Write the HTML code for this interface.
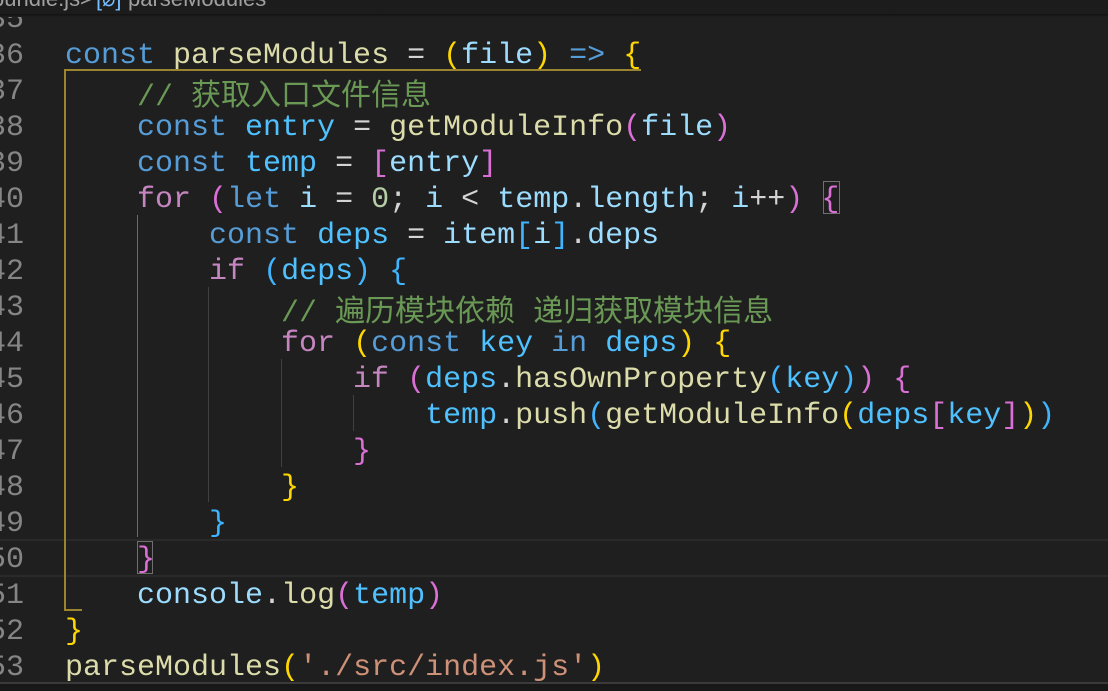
<!DOCTYPE html>
<html><head><meta charset="utf-8"><style>
html,body{margin:0;padding:0;width:1108px;height:691px;overflow:hidden;background:#1f1f1f;}
body{position:relative;font-family:"Liberation Mono","Noto Sans CJK SC",monospace;font-size:30px;}
.ln{position:absolute;left:-12px;width:36px;text-align:right;color:#858585;height:36px;line-height:36px;margin-top:3px;}
.cd{position:absolute;left:65px;height:36px;line-height:36px;white-space:pre;color:#d4d4d4;margin-top:3px;}
.k{color:#569cd6}.c{color:#c586c0}.v{color:#9cdcfe}.cv{color:#4fc1ff}.f{color:#dcdcaa}
.cm{color:#6a9955}.n{color:#b5cea8}.s{color:#ce9178}
.b1{color:#ffd700}.b2{color:#da70d6}.b3{color:#3fb4ff}
.cj{font-family:"Noto Sans CJK SC",sans-serif;}
.g{position:absolute;width:1px;background:#404040}
</style></head><body>
<div class="ln" style="top:-1px">35</div>
<div style="position:absolute;left:0;top:0;width:1108px;height:14px;background:#1c1c1c;overflow:hidden;font-family:'Liberation Sans',sans-serif;font-size:22px;color:#a0a0a0;white-space:nowrap">
<span style="position:absolute;left:-8px;top:-14px">bundle.js</span><span style="position:absolute;left:80px;top:-14px">&gt;</span><span style="position:absolute;left:96px;top:-14px;color:#75beff">[⌀]</span><span style="position:absolute;left:128px;top:-14px">parseModules</span></div>
<div style="position:absolute;left:0;top:14px;width:1108px;height:3px;background:linear-gradient(#111,#1f1f1f)"></div>

<div style="position:absolute;left:0;top:539px;width:1108px;height:34px;border-top:2px solid #2a2a2a;border-bottom:2px solid #2a2a2a"></div>
<div style="position:absolute;left:137px;top:541px;width:16px;height:33px;border:1px solid #707070;box-sizing:border-box"></div>
<div style="position:absolute;left:823px;top:181px;width:17px;height:33px;border:1px solid #707070;box-sizing:border-box"></div>

<div style="position:absolute;left:64px;top:69px;width:577px;height:542px;border-top:2px solid #9a8430;border-left:2px solid #9a8430;box-sizing:border-box"></div>
<div style="position:absolute;left:64px;top:609px;width:18px;height:2px;background:#9a8430"></div>
<div class="g" style="left:137px;top:215px;height:322px;background:#6a6a6a"></div>
<div class="g" style="left:208px;top:287px;height:215px"></div>
<div class="g" style="left:281px;top:359px;height:108px"></div>
<div class="g" style="left:353px;top:395px;height:36px"></div>

<div class="ln" style="top:35px">36</div><div class="cd" style="top:35px"><span class="k">const</span> <span class="f">parseModules</span> = <span class="b1">(</span><span class="v">file</span><span class="b1">)</span> <span class="k">=&gt;</span> <span class="b1">{</span></div>
<div class="ln" style="top:71px">37</div><div class="cd" style="top:71px">    <span class="cm">// <span class="cj">获取入口文件信息</span></span></div>
<div class="ln" style="top:107px">38</div><div class="cd" style="top:107px">    <span class="k">const</span> <span class="cv">entry</span> = <span class="f">getModuleInfo</span><span class="b2">(</span><span class="v">file</span><span class="b2">)</span></div>
<div class="ln" style="top:143px">39</div><div class="cd" style="top:143px">    <span class="k">const</span> <span class="cv">temp</span> = <span class="b2">[</span><span class="v">entry</span><span class="b2">]</span></div>
<div class="ln" style="top:179px">40</div><div class="cd" style="top:179px">    <span class="c">for</span> <span class="b2">(</span><span class="k">let</span> <span class="v">i</span> = <span class="n">0</span>; <span class="v">i</span> &lt; <span class="v">temp</span>.<span class="v">length</span>; <span class="v">i</span>++<span class="b2">)</span> <span class="b2">{</span></div>
<div class="ln" style="top:215px">41</div><div class="cd" style="top:215px">        <span class="k">const</span> <span class="cv">deps</span> = <span class="v">item</span><span class="b3">[</span><span class="v">i</span><span class="b3">]</span>.<span class="v">deps</span></div>
<div class="ln" style="top:251px">42</div><div class="cd" style="top:251px">        <span class="c">if</span> <span class="b3">(</span><span class="cv">deps</span><span class="b3">)</span> <span class="b3">{</span></div>
<div class="ln" style="top:287px">43</div><div class="cd" style="top:287px">            <span class="cm">// <span class="cj">遍历模块依赖</span> <span class="cj">递归获取模块信息</span></span></div>
<div class="ln" style="top:323px">44</div><div class="cd" style="top:323px">            <span class="c">for</span> <span class="b1">(</span><span class="k">const</span> <span class="cv">key</span> <span class="k">in</span> <span class="cv">deps</span><span class="b1">)</span> <span class="b1">{</span></div>
<div class="ln" style="top:359px">45</div><div class="cd" style="top:359px">                <span class="c">if</span> <span class="b2">(</span><span class="cv">deps</span>.<span class="f">hasOwnProperty</span><span class="b3">(</span><span class="cv">key</span><span class="b3">)</span><span class="b2">)</span> <span class="b2">{</span></div>
<div class="ln" style="top:395px">46</div><div class="cd" style="top:395px">                    <span class="cv">temp</span>.<span class="f">push</span><span class="b3">(</span><span class="f">getModuleInfo</span><span class="b1">(</span><span class="cv">deps</span><span class="b2">[</span><span class="cv">key</span><span class="b2">]</span><span class="b1">)</span><span class="b3">)</span></div>
<div class="ln" style="top:431px">47</div><div class="cd" style="top:431px">                <span class="b2">}</span></div>
<div class="ln" style="top:467px">48</div><div class="cd" style="top:467px">            <span class="b1">}</span></div>
<div class="ln" style="top:503px">49</div><div class="cd" style="top:503px">        <span class="b3">}</span></div>
<div class="ln" style="top:539px">50</div><div class="cd" style="top:539px">    <span class="b2">}</span></div>
<div class="ln" style="top:575px">51</div><div class="cd" style="top:575px">    <span class="v">console</span>.<span class="f">log</span><span class="b2">(</span><span class="cv">temp</span><span class="b2">)</span></div>
<div class="ln" style="top:611px">52</div><div class="cd" style="top:611px"><span class="b1">}</span></div>
<div class="ln" style="top:647px">53</div><div class="cd" style="top:647px"><span class="f">parseModules</span><span class="b1">(</span><span class="s">'./src/index.js'</span><span class="b1">)</span></div>

<div style="position:absolute;left:0;top:682px;width:1108px;height:2px;background:#3a3a3a"></div>
<div style="position:absolute;left:0;top:684px;width:1108px;height:7px;background:#181818"></div>
</body></html>
